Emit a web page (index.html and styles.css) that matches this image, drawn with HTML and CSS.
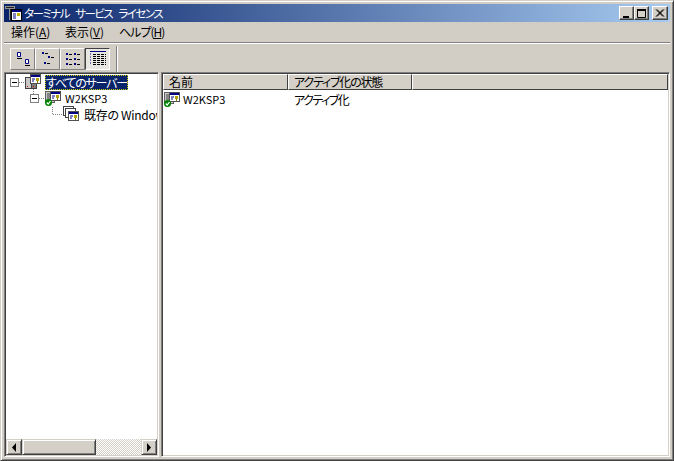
FILE: index.html
```html
<!DOCTYPE html>
<html lang="ja">
<head>
<meta charset="utf-8">
<title>ターミナル サービス ライセンス</title>
<link rel="stylesheet" href="styles.css">
</head>
<body>
<svg width="0" height="0" class="defs">
  <defs>
    <g id="cert">
      <rect x="0.500" y="0.500" width="10" height="9" fill="#fff" stroke="#505050"/>
      <rect x="1" y="1" width="9" height="2" fill="#000080"/>
      <path d="M2 5h3M2 7h2" stroke="#000080"/>
      <rect x="6" y="4" width="3" height="3" fill="#b0a000"/>
      <path d="M7.500 7v2" stroke="#808000" stroke-width="1"/>
    </g>
    <g id="server">
      <rect x="0.500" y="1.500" width="9" height="11" fill="#c8c8c8" stroke="#606060"/>
      <path d="M2 4h4M2 6h4M2 8h6" stroke="#404040"/>
      <use href="#cert" transform="translate(5 1)"/>
      <circle cx="3.500" cy="12.500" r="3.500" fill="#008000"/>
      <path d="M1.800 12.500l1.400 1.500 2.300-3" stroke="#fff" fill="none" stroke-width="1.200"/>
    </g>
  </defs>
</svg>
<div class="window">
  <header class="titlebar">
    <svg class="app-icon" width="17" height="16" viewBox="0 0 17 16">
      <path d="M0 1h10v3H7v11H4V4H0z" fill="#909090"/>
      <path d="M1 2.500h8M5.500 4v11" stroke="#202020"/>
      <rect x="6.500" y="4.500" width="10" height="11" fill="#fff" stroke="#000"/>
      <rect x="7" y="5" width="9" height="2" fill="#000080"/>
      <rect x="12" y="8" width="3" height="3" fill="#c0b000"/>
      <path d="M8 9h3M8 11h3M8 13h3" stroke="#000080"/>
    </svg>
    <span class="title-text">ターミナル サービス ライセンス</span>
    <div class="caption-buttons">
      <button class="cap-btn" aria-label="最小化"><svg width="10" height="9"><rect x="1" y="7" width="6" height="2" fill="#000"/></svg></button>
      <button class="cap-btn" aria-label="最大化"><svg width="10" height="9"><path d="M0.500 1.500h8v7h-8z" fill="none" stroke="#000"/><rect x="0" y="0" width="9" height="2" fill="#000"/></svg></button>
      <button class="cap-btn cap-close" aria-label="閉じる"><svg width="10" height="9"><path d="M1 0.500l7 7M2 0.500l7 7M8 0.500l-7 7M9 0.500l-7 7" stroke="#000"/></svg></button>
    </div>
  </header>
  <nav class="menubar">
    <span class="menu-item">操作(<u>A</u>)</span>
    <span class="menu-item">表示(<u>V</u>)</span>
    <span class="menu-item kana-menu">ヘルプ(<u>H</u>)</span>
  </nav>
  <div class="toolbar">
    <button class="tool-btn" aria-label="大きいアイコン"><svg width="16" height="16"><path d="M2.500 1.500h3v4h-3z" fill="#fff" stroke="#000080"/><path d="M2 7.500h5" stroke="#000"/><path d="M10.500 8.500h3v4h-3z" fill="#fff" stroke="#000080"/><path d="M10 14.500h5" stroke="#000"/></svg></button>
    <button class="tool-btn" aria-label="小さいアイコン"><svg width="16" height="16"><path d="M2 1h2v2H2zM8 5h2v2H8zM4 11h2v2H4z" fill="#000080"/><path d="M5 2.500h3M11 6.500h3M7 12.500h3" stroke="#000"/></svg></button>
    <button class="tool-btn" aria-label="一覧"><svg width="16" height="16"><path d="M1 2h2v2H1zM9 2h2v2H9zM1 7h2v2H1zM9 7h2v2H9zM1 12h2v2H1zM9 12h2v2H9z" fill="#000080"/><path d="M4 3.500h3M12 3.500h3M4 8.500h3M12 8.500h3M4 13.500h3M12 13.500h3" stroke="#000"/></svg></button>
    <button class="tool-btn tool-active" aria-label="詳細"><svg width="17" height="15"><path d="M1 0.500h16" stroke="#000080"/><path d="M1 3h2M1 6h2M1 9h2M1 12h2" stroke="#000080" stroke-dasharray="1 1"/><path d="M4 3.500h13M4 5.500h13M4 7.500h13M4 9.500h13M4 11.500h13M4 13.500h13" stroke="#000" stroke-dasharray="3 1"/></svg></button>
    <span class="tool-sep"></span>
  </div>
  <main class="panes">
    <section class="tree-pane">
      <div class="tree">
        <svg class="tree-lines" width="80" height="60"><path d="M13 8.500h6M27.500 15v5M33 24.500h6M46.500 33v7M47 40.500h10" stroke="#808080" stroke-dasharray="1 1" fill="none"/></svg>
        <div class="tree-row row-root">
          <span class="expander"></span>
          <svg class="node-icon" width="16" height="16"><rect x="0.500" y="3.500" width="6" height="11" fill="#c8c8c8" stroke="#404040"/><rect x="6.500" y="3.500" width="5" height="11" fill="#808080" stroke="#404040"/><rect x="2" y="12" width="1" height="1" fill="#d00000"/><rect x="8" y="12" width="1" height="1" fill="#d00000"/><use href="#cert" transform="translate(5 0)"/></svg>
          <span class="label selected">すべてのサーバー</span>
        </div>
        <div class="tree-row row-server">
          <span class="expander"></span>
          <svg class="node-icon" width="16" height="16"><use href="#server"/></svg>
          <span class="label latin">W2KSP3</span>
        </div>
        <div class="tree-row row-pack">
          <svg class="node-icon" width="16" height="16"><rect x="0.500" y="0.500" width="10" height="9" fill="#fff" stroke="#404040"/><rect x="2.500" y="2.500" width="10" height="9" fill="#fff" stroke="#404040"/><use href="#cert" transform="translate(5 5)"/></svg>
          <span class="label pack-label">既存の Windows 2000 ライセンス</span>
        </div>
      </div>
      <div class="hscroll">
        <button class="scroll-btn" aria-label="左"><svg width="5" height="9"><path d="M4 0v9L0 4.500z" fill="#000"/></svg></button>
        <span class="scroll-thumb"></span>
        <span class="scroll-track"></span>
        <button class="scroll-btn" aria-label="右"><svg width="5" height="9"><path d="M0 0v9l4-4.500z" fill="#000"/></svg></button>
      </div>
    </section>
    <section class="list-pane">
      <div class="list-head">
        <span class="col col-name">名前</span>
        <span class="col col-state">アクティブ化の状態</span>
        <span class="col col-rest"></span>
      </div>
      <div class="list-row">
        <span class="cell cell-name"><svg class="node-icon" width="16" height="16"><use href="#server"/></svg><span class="latin list-latin">W2KSP3</span></span>
        <span class="cell cell-state">アクティブ化</span>
      </div>
    </section>
  </main>
</div>
</body>
</html>
```
FILE: styles.css
```css
* { box-sizing: border-box; }
html, body { margin: 0; padding: 0; }
body {
  width: 674px;
  height: 461px;
  overflow: hidden;
  font-family: "Noto Sans CJK JP", "Liberation Sans", sans-serif;
  font-size: 12px;
  font-feature-settings: "palt";
  color: #000;
  background: #d4d0c8;
}
.defs { position: absolute; }
.window {
  width: 674px;
  height: 461px;
  padding: 3px;
  display: flex;
  flex-direction: column;
  background: repeating-conic-gradient(#d4d0c8 0 25%, #cfcbc3 0 50%) 0 0 / 2px 2px;
  border: 1px solid;
  border-color: #d4d0c8 #404040 #404040 #d4d0c8;
  box-shadow: inset 1px 1px 0 #fff, inset -1px -1px 0 #808080;
}
.titlebar {
  height: 18px;
  flex: none;
  display: flex;
  align-items: center;
  padding: 0 2px 0 1px;
  background: linear-gradient(90deg, #0a246a, #a6caf0);
  color: #fff;
}
.app-icon { flex: none; margin-right: 2px; }
.title-text { font-size: 11.500px; letter-spacing: -1.500px; word-spacing: 5px; line-height: 18px; white-space: nowrap; }
.caption-buttons { margin-left: auto; display: flex; }
.cap-btn {
  width: 15px;
  height: 14px;
  padding: 0;
  display: flex;
  align-items: center;
  justify-content: center;
  background: #d4d0c8;
  border: 1px solid;
  border-color: #fff #404040 #404040 #fff;
  box-shadow: inset -1px -1px 0 #808080;
}
.cap-close { width: 16px; margin-left: 3px; }
.menubar {
  height: 20px;
  flex: none;
  display: flex;
  align-items: center;
  padding-left: 7px;
}
.menu-item { width: 54px; flex: none; line-height: 18px; white-space: nowrap; }
.kana-menu { letter-spacing: -1px; }
.toolbar {
  height: 30px;
  flex: none;
  display: flex;
  align-items: center;
  padding: 2px 0 0 6px;
  border-top: 1px solid #808080;
  box-shadow: inset 0 1px 0 #fff;
}
.tool-btn {
  width: 25px;
  height: 22px;
  padding: 0;
  display: flex;
  align-items: center;
  justify-content: center;
  background: #d4d0c8;
  border: 1px solid;
  border-color: #fff #808080 #808080 #fff;
}
.tool-active {
  border-color: #404040 #fff #fff #404040;
  background: #e8e6e1;
}
.tool-sep {
  width: 2px;
  height: 26px;
  margin-left: 6px;
  border-left: 1px solid #808080;
  border-right: 1px solid #fff;
}
.panes {
  flex: 1;
  min-height: 0;
  display: flex;
  gap: 2px;
}
.tree-pane {
  width: 155px;
  flex: none;
  display: flex;
  flex-direction: column;
  background: #fff;
  border: 1px solid;
  border-color: #808080 #fff #fff #808080;
  box-shadow: inset 1px 1px 0 #404040, inset -1px -1px 0 #d4d0c8;
  padding: 1px;
}
.tree {
  flex: 1;
  min-height: 0;
  position: relative;
  overflow: hidden;
}
.tree-lines { position: absolute; left: 0; top: 0; }
.tree-row {
  height: 16px;
  display: flex;
  align-items: center;
  position: relative;
  white-space: nowrap;
}
.row-root { padding-left: 4px; }
.row-server { padding-left: 24px; }
.row-pack { padding-left: 57px; }
.expander {
  width: 9px;
  height: 9px;
  border: 1px solid #808080;
  background: linear-gradient(#000, #000) center / 5px 1px no-repeat #fff;
  margin-right: 6px;
  flex: none;
}
.node-icon { flex: none; }
.label { margin-left: 4px; line-height: 15px; height: 15px; }
.pack-label { margin-left: 5px; letter-spacing: -0.300px; }
.latin { font-size: 11px; }
.selected {
  background: #0a246a;
  color: #fff;
  padding: 0 1px;
  letter-spacing: -1.200px;
  outline: 1px dotted #d4d000;
  outline-offset: -1px;
}
.hscroll { height: 16px; flex: none; display: flex; background: #d4d0c8; }
.scroll-btn {
  width: 16px;
  height: 16px;
  padding: 0;
  display: flex;
  align-items: center;
  justify-content: center;
  background: #d4d0c8;
  border: 1px solid;
  border-color: #d4d0c8 #404040 #404040 #d4d0c8;
  box-shadow: inset 1px 1px 0 #fff, inset -1px -1px 0 #808080;
}
.scroll-thumb {
  width: 74px;
  background: #d4d0c8;
  border: 1px solid;
  border-color: #d4d0c8 #404040 #404040 #d4d0c8;
  box-shadow: inset 1px 1px 0 #fff, inset -1px -1px 0 #808080;
}
.scroll-track {
  flex: 1;
  background: repeating-conic-gradient(#fff 0 25%, #d4d0c8 0 50%) 0 0 / 2px 2px;
}
.list-pane {
  flex: 1;
  min-width: 0;
  background: #fff;
  border: 1px solid;
  border-color: #808080 #fff #fff #808080;
  box-shadow: inset 1px 1px 0 #404040, inset -1px -1px 0 #d4d0c8;
  padding: 1px;
}
.list-head { height: 16px; display: flex; }
.col {
  height: 16px;
  background: #d4d0c8;
  border: 1px solid;
  border-color: #fff #404040 #404040 #fff;
  padding-left: 5px;
  line-height: 14px;
  white-space: nowrap;
}
.col-name { width: 125px; }
.col-state { width: 124px; letter-spacing: -1.200px; }
.col-rest { flex: 1; }
.list-row { height: 18px; display: flex; align-items: center; }
.cell { white-space: nowrap; }
.cell-name { width: 125px; display: flex; align-items: center; padding-left: 1px; }
.list-latin { margin-left: 3px; }
.cell-state { padding-left: 6px; letter-spacing: -1.500px; }
```
